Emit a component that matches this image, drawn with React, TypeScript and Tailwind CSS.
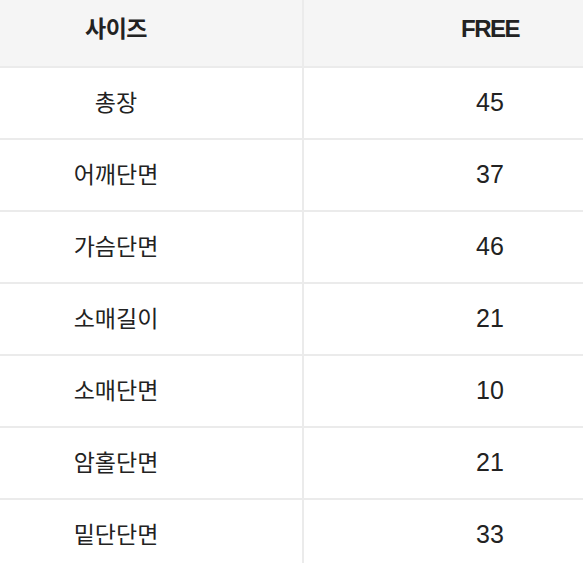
import React from "react";

const rows: [string, string][] = [
  ["총장", "45"],
  ["어깨단면", "37"],
  ["가슴단면", "46"],
  ["소매길이", "21"],
  ["소매단면", "10"],
  ["암홀단면", "21"],
  ["밑단단면", "33"],
];

export default function App() {
  return (
    <div className="w-[583px] h-[563px] overflow-hidden bg-white">
      <div
        className="w-[746px] ml-[-70px] text-[#222222]"
        style={{ fontFamily: '"Liberation Sans", "Noto Sans CJK KR", sans-serif' }}
      >
        <div className="grid grid-cols-[374px_372px] h-[68px] bg-[#f5f5f5] border-b-2 border-[#ebebeb]">
          <div className="flex items-center justify-center border-r-2 border-[#ebebeb] pb-[8px] text-[23px] font-bold tracking-[-0.5px]">
            사이즈
          </div>
          <div className="flex items-center justify-center pb-[8px] text-[24px] font-bold tracking-[-1.5px]">
            FREE
          </div>
        </div>
        {rows.map(([k, v]) => (
          <div key={k} className="grid grid-cols-[374px_372px] h-[72px] border-b-2 border-[#ebebeb]">
            <div className="flex items-center justify-center border-r-2 border-[#ebebeb] text-[23px]">
              {k}
            </div>
            <div className="flex items-center justify-center text-[25px]">{v}</div>
          </div>
        ))}
      </div>
    </div>
  );
}
